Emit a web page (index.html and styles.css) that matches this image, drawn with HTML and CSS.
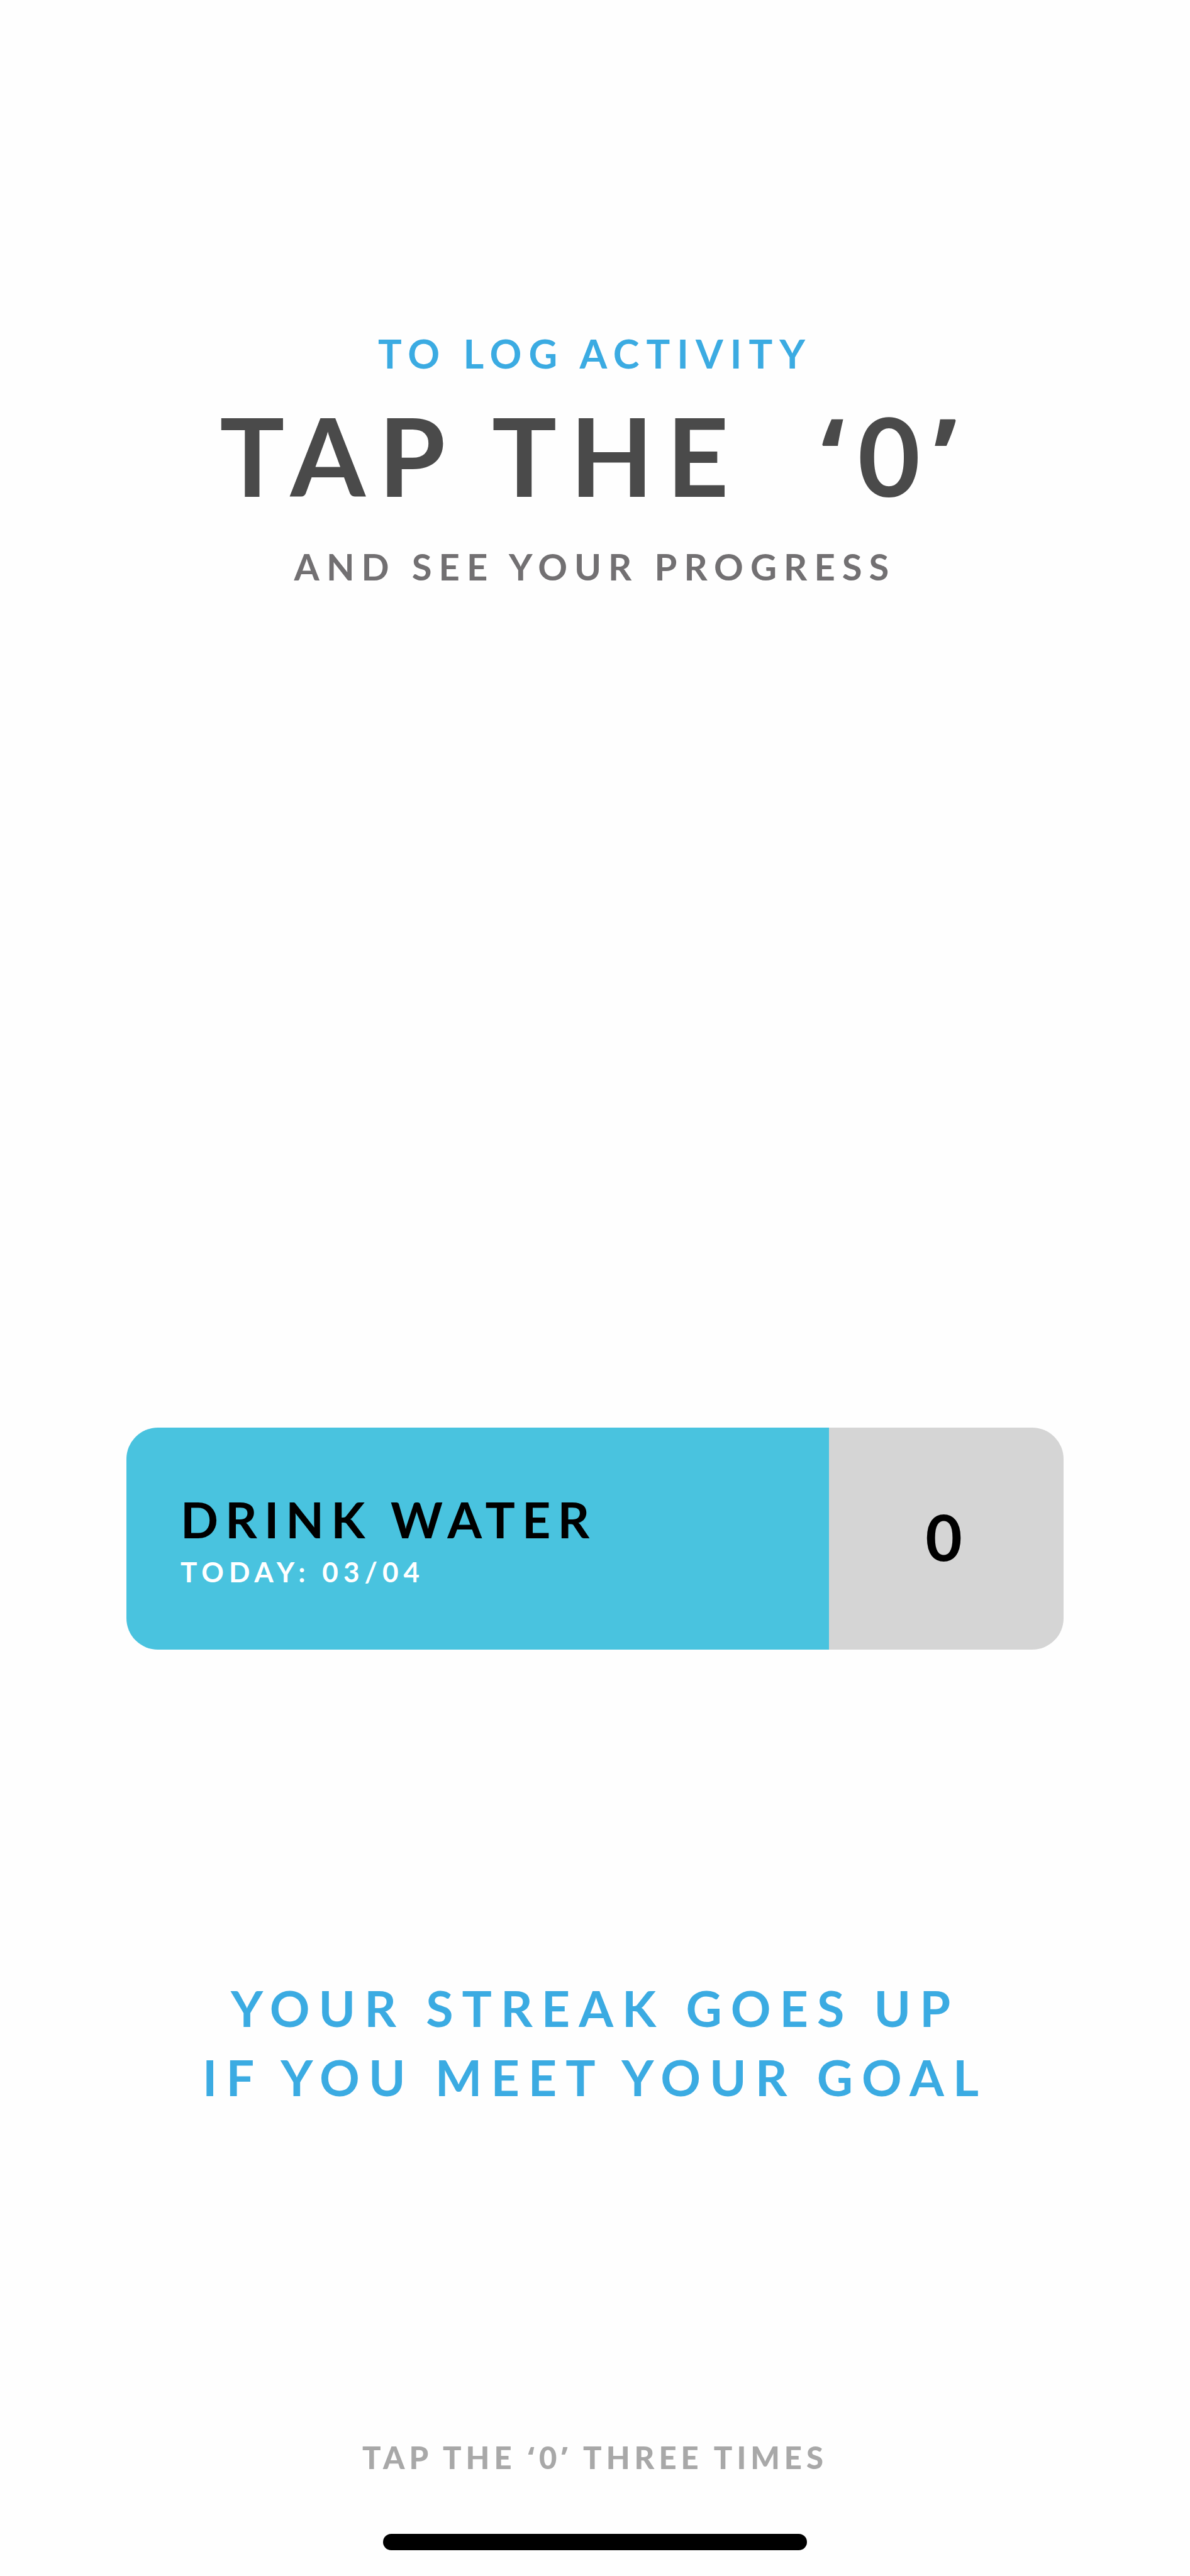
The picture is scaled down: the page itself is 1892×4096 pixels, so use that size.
FILE: index.html
```html
<!DOCTYPE html>
<html lang="en">
<head>
  <meta charset="UTF-8" />
  <meta name="viewport" content="width=device-width, initial-scale=1.0" />
  <title>Log Activity</title>
  <link rel="stylesheet" href="styles.css">
</head>
<body>
  <header class="intro">
    <p class="intro-top">TO LOG ACTIVITY</p>
    <h1>TAP THE &nbsp;<span class="quote">‘</span>0<span class="quote">’</span></h1>
    <p class="intro-bottom">AND SEE YOUR PROGRESS</p>
  </header>

  <main>
    <div class="habit">
      <div class="habit-info">
        <h2 id="habit-name">DRINK WATER</h2>
        <p class="habit-date">TODAY: 03/04</p>
      </div>
      <button class="habit-count" type="button" aria-describedby="habit-name">0</button>
    </div>

    <p class="streak">YOUR STREAK GOES UP<br>IF YOU MEET YOUR GOAL</p>
  </main>

  <footer>
    <p class="hint">TAP THE <span class="quote">‘</span>0<span class="quote">’</span> THREE TIMES</p>
    <div class="home-bar"></div>
  </footer>
</body>
</html>
```
FILE: styles.css
```css
* {
  margin: 0;
  padding: 0;
  box-sizing: border-box;
}

body {
  display: flex;
  flex-direction: column;
  min-height: 100vh;
  background: #fefefe;
  font-family: Lato, sans-serif;
  font-weight: 700;
  text-align: center;
}

.intro {
  padding-top: 522px;
}

.intro-top {
  color: #3babe2;
  font-size: 63px;
  line-height: 80px;
  letter-spacing: 11px;
}

h1 {
  margin: 21px 0 42px;
  color: #4a4a4a;
  font-size: 172px;
  font-weight: 700;
  line-height: 200px;
  letter-spacing: 21px;
}

.quote {
  font-family: "Open Sans", sans-serif;
  font-weight: 700;
}

.intro-bottom {
  color: #727072;
  font-size: 58px;
  line-height: 70px;
  letter-spacing: 11px;
}

main {
  padding: 1334px 201px 0;
}

.habit {
  display: flex;
  min-height: 353px;
  border-radius: 50px;
  overflow: hidden;
}

.habit-info {
  flex: 1;
  padding: 98px 86px 80px;
  background: #49c3df;
  text-align: left;
}

.habit-info h2 {
  color: #000;
  font-size: 79px;
  font-weight: 700;
  line-height: 96px;
  letter-spacing: 11px;
}

.habit-date {
  color: #fff;
  font-size: 44px;
  line-height: 70px;
  letter-spacing: 8px;
}

.habit-count {
  width: 373px;
  padding: 0 8px 8px 0;
  border: none;
  background: #d5d5d5;
  color: #000;
  font: inherit;
  font-size: 101px;
  cursor: pointer;
}

.streak {
  margin-top: 515px;
  color: #3babe2;
  font-size: 79px;
  line-height: 110px;
  letter-spacing: 14px;
}

footer {
  margin-top: auto;
  padding-bottom: 41px;
}

.hint {
  color: #a8a8a8;
  font-size: 49px;
  font-weight: 900;
  line-height: 60px;
  letter-spacing: 7px;
}

.home-bar {
  width: 674px;
  max-width: 80%;
  height: 26px;
  margin: 92px auto 0;
  border-radius: 13px;
  background: #000;
}
```
